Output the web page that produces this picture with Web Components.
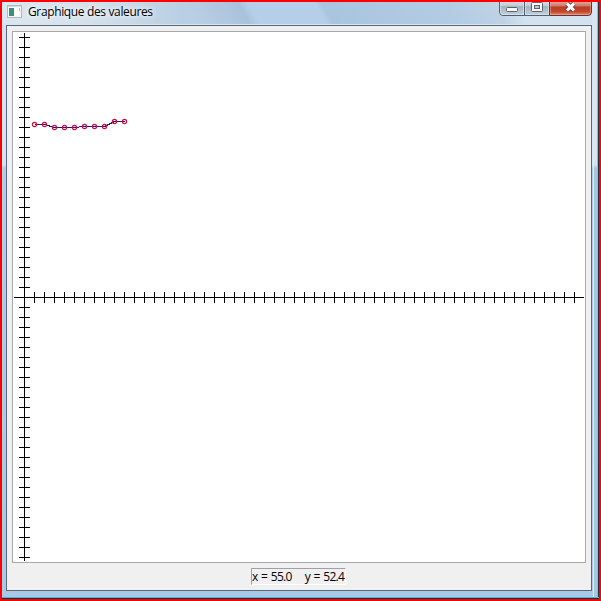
<!DOCTYPE html>
<html lang="fr"><head><meta charset="utf-8"><title>Graphique des valeures</title>
<style>html,body{margin:0;width:601px;height:601px;overflow:hidden}</style></head>
<body>
<app-window>
<title-bar slot="title">Graphique des valeures</title-bar>
<value-plot></value-plot>
<coord-readout><span>x = 55.0</span><span slot="y">y = 52.4</span></coord-readout>
</app-window>
<script>
const define = (name, html, setup) => customElements.define(name, class extends HTMLElement {
  constructor() {
    super();
    this.attachShadow({mode: 'open'}).innerHTML = html;
    if (setup) setup(this.shadowRoot);
  }
});

define('window-controls', `
<style>:host{display:block;width:93px;height:14px}svg{display:block}</style>
<svg width="93" height="14" viewBox="0 0 93 14">
<defs>
<linearGradient id="g" x2="0" y2="1"><stop offset="0" stop-color="#d3dce5"/><stop offset=".3" stop-color="#c0cad5"/><stop offset=".34" stop-color="#a5b2c0"/><stop offset="1" stop-color="#c3d2df"/></linearGradient>
<linearGradient id="r" x2="0" y2="1"><stop offset="0" stop-color="#dba497"/><stop offset=".3" stop-color="#cf7966"/><stop offset=".36" stop-color="#bb3b24"/><stop offset=".7" stop-color="#c2462c"/><stop offset="1" stop-color="#dc9478"/></linearGradient>
</defs>
<path d="M.5 0V10Q.5 13.500 4 13.500H86V0Z" fill="url(#g)"/>
<path d="M50 0H92.500V10Q92.500 13.500 89 13.500H50Z" fill="url(#r)"/>
<path d="M.5 0V10Q.5 13.500 4 13.500H50M25.500 0V13" fill="none" stroke="#53606f"/>
<path d="M50.500 0V13.500H89Q92.500 13.500 92.500 10V0" fill="none" stroke="#6b2f34"/>
<path d="M1.500 0V10Q1.500 12.500 4 12.500H24.500V0M26.500 0V12.500H49.500V0" fill="none" stroke="#e4ebf2" opacity=".6"/>
<path d="M51.500 0V12.500H88Q91.500 12.500 91.500 10V0" fill="none" stroke="#f0b8a4" opacity=".5"/>
<rect x="7.500" y="5.500" width="11" height="4" rx="1" fill="#f4f6f8" stroke="#59616d"/>
<rect x="32.500" y=".5" width="11" height="9" rx="1" fill="#f4f6f8" stroke="#59616d"/>
<rect x="35.500" y="3.500" width="5" height="3" fill="#bdc9d5" stroke="#59616d"/>
<path d="M68 1.700L75 8.300M75 1.700L68 8.300" stroke="#704047" stroke-width="5"/>
<path d="M68 1.700L75 8.300M75 1.700L68 8.300" stroke="#fff" stroke-width="3"/>
</svg>`);

define('title-bar', `
<style>
:host{display:flex;height:22px;box-sizing:border-box;padding-left:5px;color:#000;font:12px/20px "Open Sans","Noto Sans",sans-serif}
.icon{margin:3px 6px 0 0;flex:none}
.t{white-space:nowrap;flex:1;text-shadow:0 0 7px #fff,0 0 5px #fff;letter-spacing:-.36px}
window-controls{flex:none;margin-right:5px}
</style>
<svg class="icon" width="15" height="13" viewBox="0 0 15 13"><rect x=".5" y=".5" width="14" height="12" fill="#f4f6f8" stroke="#b0b8c2"/><rect x="1" y="1" width="13" height="1" fill="#d5dae0"/><rect x="2" y="3" width="5" height="8" fill="#438c78"/><rect x="8" y="3" width="4" height="8" fill="#fff"/><rect x="12" y="3" width="1" height="3" fill="#b4bac4"/></svg>
<span class="t"><slot></slot></span><window-controls></window-controls>`);

define('value-plot', `
<style>:host{display:block;box-sizing:border-box;width:574px;height:532px;border:1px solid #a5a8ac;background:#fff}svg{display:block}</style>
<svg width="572" height="530" viewBox="13 32 572 530" shape-rendering="crispEdges"></svg>`, root => {
  let d = 'M24.500 33V561M14 297.500H584';
  for (let y = 37; y <= 557; y += 10) if (y !== 297) d += `M19 ${y}.5H30`;
  for (let x = 34; x <= 574; x += 10) d += `M${x}.5 292V303`;
  const ys = [124,124,127,127,127,126,126,126,121,121];
  const pts = ys.map((y, i) => [34.5 + i * 10, y + .5]);
  root.querySelector('svg').innerHTML = `<path d="${d}" stroke="#000" fill="none"/>
<polyline points="${pts.join(' ')}" fill="none" stroke="#191996"/>
<g fill="none" stroke="#c4123c" stroke-width="1.15" shape-rendering="geometricPrecision">${pts.map(p => `<circle cx="${p[0]}" cy="${p[1]}" r="2.1"/>`).join('')}</g>`;
});

define('coord-readout', `
<style>
:host{display:flex;gap:13px;align-self:flex-start;box-sizing:border-box;width:95px;height:17px;margin:5px 0 0 239px;border:1px solid #a0a0a0;border-right-color:#fff;border-bottom-color:#fff;color:#000;font:12px/16px "Open Sans","Noto Sans",sans-serif;letter-spacing:-.7px;word-spacing:1.1px;white-space:nowrap}
</style><slot></slot><slot name="y"></slot>`);

define('app-window', `
<style>
:host{display:flex;flex-direction:column;box-sizing:border-box;width:601px;height:601px;border:2px solid #f00;position:relative;
background:linear-gradient(#d5e4f1,#d5e4f1 163px,#b2cce6 166px,#a9c9e6)}
.bar{height:23px;box-sizing:border-box;border-bottom:1px solid #d8e6f2;margin-right:2px;
background:linear-gradient(90deg,#dce7f0 0,#d3e0eb 90px,transparent 180px),linear-gradient(61deg,#b9cfe4 0 170px,#a9c2dc 217px,#b5cfea 225px 284px,#a9c4df 290px,#b2cce5 400px,#bfd2e4 440px,#d3e2ee 460px)}
.client{box-sizing:border-box;width:586px;height:566px;margin-left:4px;border:1px solid #586879;background:#f0f0f0;display:flex;flex-direction:column;padding:5px 5px 0}
.right,.bottom{position:absolute}
.right{right:0;top:0;width:6px;height:597px;background:linear-gradient(90deg,#dcebf5 1px,transparent 1px 4px,#67cce4 4px 5px,#203742 5px),linear-gradient(#d3e6f1 163px,#a7c7e1 166px)}
.bottom{left:0;right:0;bottom:0;height:2px;background:linear-gradient(#45bad2 1px,#18313c 1px)}
</style>
<div class="right"></div><div class="bar"><slot name="title"></slot></div><div class="client"><slot></slot></div><div class="bottom"></div>`);
</script>
</body></html>
